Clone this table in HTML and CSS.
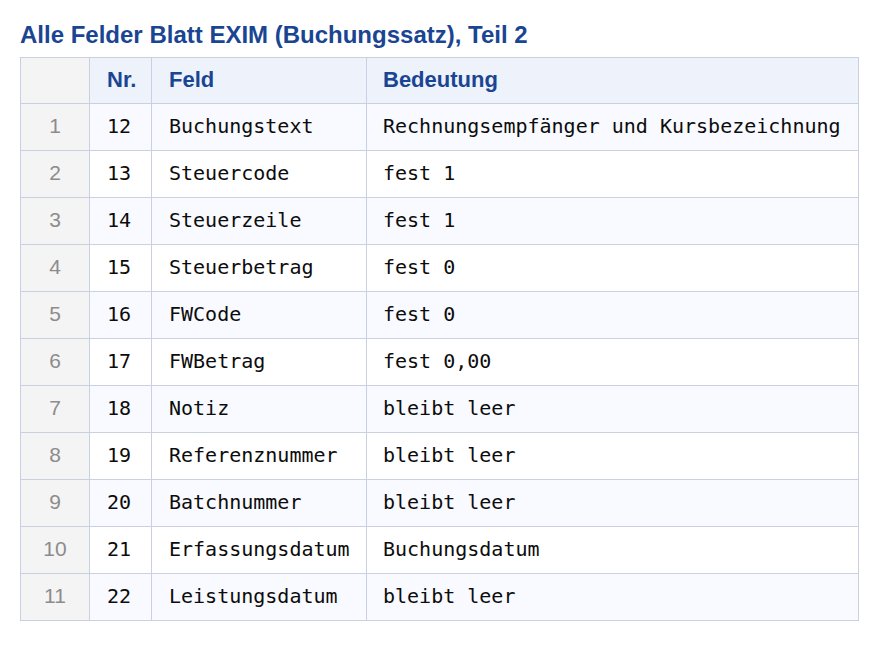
FILE: index.html
```html
<!DOCTYPE html>
<html lang="de">
<head>
<meta charset="utf-8">
<title>Alle Felder Blatt EXIM</title>
<link rel="stylesheet" href="styles.css">
</head>
<body>
<h2 class="title">Alle Felder Blatt EXIM (Buchungssatz), Teil 2</h2>
<table class="grid">
  <colgroup>
    <col class="c-idx">
    <col class="c-nr">
    <col class="c-feld">
    <col class="c-bed">
  </colgroup>
  <thead>
    <tr><th class="idx"></th><th>Nr.</th><th>Feld</th><th>Bedeutung</th></tr>
  </thead>
  <tbody>
    <tr><td class="idx">1</td><td>12</td><td>Buchungstext</td><td>Rechnungsempfänger und Kursbezeichnung</td></tr>
    <tr><td class="idx">2</td><td>13</td><td>Steuercode</td><td>fest 1</td></tr>
    <tr><td class="idx">3</td><td>14</td><td>Steuerzeile</td><td>fest 1</td></tr>
    <tr><td class="idx">4</td><td>15</td><td>Steuerbetrag</td><td>fest 0</td></tr>
    <tr><td class="idx">5</td><td>16</td><td>FWCode</td><td>fest 0</td></tr>
    <tr><td class="idx">6</td><td>17</td><td>FWBetrag</td><td>fest 0,00</td></tr>
    <tr><td class="idx">7</td><td>18</td><td>Notiz</td><td>bleibt leer</td></tr>
    <tr><td class="idx">8</td><td>19</td><td>Referenznummer</td><td>bleibt leer</td></tr>
    <tr><td class="idx">9</td><td>20</td><td>Batchnummer</td><td>bleibt leer</td></tr>
    <tr><td class="idx">10</td><td>21</td><td>Erfassungsdatum</td><td>Buchungsdatum</td></tr>
    <tr><td class="idx">11</td><td>22</td><td>Leistungsdatum</td><td>bleibt leer</td></tr>
  </tbody>
</table>
</body>
</html>
```
FILE: styles.css
```css
html, body {
  margin: 0;
  padding: 0;
  background: #ffffff;
}
body {
  padding: 19px 20px 0 20px;
  font-family: "Liberation Sans", Arial, sans-serif;
}
.title {
  margin: 0 0 7px 0;
  font-size: 24px;
  line-height: 31px;
  font-weight: bold;
  color: #1a4592;
}
.grid {
  border-collapse: collapse;
  table-layout: fixed;
  width: 838px;
}
.c-idx { width: 69px; }
.c-nr { width: 62px; }
.c-feld { width: 215px; }
.c-bed { width: 492px; }
.grid th, .grid td {
  border: 1px solid #c8d0e2;
  height: 47px;
  padding: 0 0 3px 17px;
  box-sizing: border-box;
  text-align: left;
  vertical-align: middle;
  white-space: nowrap;
}
.grid th {
  background: #eef2fb;
  color: #1a4592;
  font-size: 22px;
  font-weight: bold;
  height: 46px;
  padding-bottom: 2px;
}
.grid td {
  font-family: "DejaVu Sans Mono", "Liberation Mono", monospace;
  font-size: 20px;
  color: #0c0c0c;
}
.grid td:last-child,
.grid th:last-child {
  padding-left: 16px;
}
.grid tbody tr:nth-child(odd) td {
  background: #f8faff;
}
.grid tbody tr:nth-child(even) td {
  background: #ffffff;
}
.grid .idx,
.grid tbody tr td.idx {
  background: #f4f4f4;
  text-align: center;
  padding: 0 0 2px 0;
  font-family: "Liberation Sans", Arial, sans-serif;
  font-size: 21px;
  color: #8c8c8c;
}
.grid thead th.idx {
  background: #f4f4f4;
}
```
